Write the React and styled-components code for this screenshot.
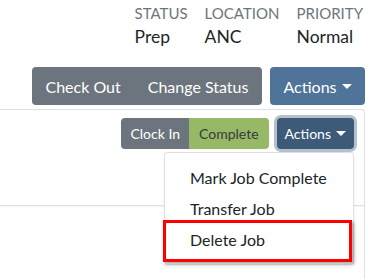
import React from 'react';
import styled, { createGlobalStyle, css } from 'styled-components';

const GlobalStyle = createGlobalStyle`
    body {
        margin: 0;
        background: #fff;
        font-family: Lato, "Open Sans", sans-serif;
        color: #212529;
    }
`;

const Page = styled.div`
    width: 370px;
    height: 279px;
    overflow: hidden;
`;

const InfoRow = styled.dl`
    display: flex;
    justify-content: flex-end;
    margin: 0;
    padding: 2px 7px 0 0;
`;

const InfoCol = styled.div`
    width: ${props => props.width || 'auto'};
    line-height: 23px;

    dt {
        font-size: 15px;
        color: #6c757d;
        text-transform: uppercase;
    }

    dd {
        margin: 0;
        font-size: 17.5px;
        color: #212529;
    }
`;

const Toolbar = styled.div`
    display: flex;
    justify-content: flex-end;
    gap: 8px;
    margin-top: 19px;
    padding-right: 5px;
`;

const variants = {
    secondary: css`background: #6c757d; color: #fff;`,
    primary: css`background: #4f7399; color: #fff;`,
    success: css`background: #97b865; color: #343a40;`,
    dark: css`background: #3d5a79; color: #fff;`,
};

const Button = styled.button`
    display: inline-flex;
    align-items: center;
    border: 0;
    margin: 0;
    font-family: inherit;
    font-size: ${props => props.small ? '14px' : '16px'};
    height: ${props => props.small ? '31px' : '38px'};
    padding: 0 ${props => props.pad || (props.small ? '9px' : '13.5px')};
    border-radius: 4px;
    cursor: pointer;
    ${props => variants[props.variant]}
    ${props => props.focused && css`
        box-shadow: 0 0 0 3px #b4c0ce;
    `}
`;

const ButtonGroup = styled.div`
    display: flex;

    ${Button} {
        border-radius: 0;
    }
    ${Button}:first-child {
        border-radius: 4px 0 0 4px;
    }
    ${Button}:last-child {
        border-radius: 0 4px 4px 0;
    }
`;

const Caret = styled.span`
    display: inline-block;
    margin-left: 5px;
    border-top: 5px solid currentColor;
    border-left: 5px solid transparent;
    border-right: 5px solid transparent;
`;

const Card = styled.section`
    margin: 4px 5px 0 0;
    border-top: 1px solid #dee2e6;
    border-right: 1px solid #dee2e6;
    border-top-right-radius: 4px;
    height: 200px;
`;

const CardHeader = styled.div`
    display: flex;
    justify-content: flex-end;
    align-items: flex-start;
    gap: 8px;
    height: 96px;
    padding: 8px 10px 0 0;
    box-sizing: border-box;
    border-bottom: 1px solid #dfe1e3;
    box-shadow: 0 1px 1px rgba(0, 0, 0, 0.04);
`;

const Dropdown = styled.div`
    position: relative;
`;

const Menu = styled.ul`
    position: absolute;
    top: 34px;
    right: 0;
    width: 190px;
    box-sizing: border-box;
    margin: 0;
    padding: 10px 0 8px;
    list-style: none;
    background: #fff;
    border: 1px solid rgba(0, 0, 0, 0.12);
    border-radius: 4px;
    box-shadow: 0 2px 4px rgba(0, 0, 0, 0.06);
    z-index: 2;
`;

const MenuItem = styled.li`
    position: relative;
    padding: 3px 0 4px 25px;
    font-size: 16px;
    line-height: 24px;
    color: #212529;

    ${props => props.highlighted && css`
        &::after {
            content: "";
            position: absolute;
            top: -5px;
            bottom: -6px;
            left: -2px;
            right: 1px;
            border: 3px solid #ff0000;
            box-shadow: 2px 2px 3px rgba(0, 0, 0, 0.35);
        }
    `}
`;

export default function App() {
    return (
        <Page>
            <GlobalStyle />

            <InfoRow>
                <InfoCol width="70px"><dt>Status</dt><dd>Prep</dd></InfoCol>
                <InfoCol width="92px"><dt>Location</dt><dd>ANC</dd></InfoCol>
                <InfoCol><dt>Priority</dt><dd>Normal</dd></InfoCol>
            </InfoRow>

            <Toolbar>
                <ButtonGroup>
                    <Button variant="secondary">Check Out</Button>
                    <Button variant="secondary">Change Status</Button>
                </ButtonGroup>
                <Button variant="primary">Actions<Caret /></Button>
            </Toolbar>

            <Card>
                <CardHeader>
                    <ButtonGroup>
                        <Button small variant="secondary">Clock In</Button>
                        <Button small pad="10px" variant="success">Complete</Button>
                    </ButtonGroup>
                    <Dropdown>
                        <Button small focused pad="8px" variant="dark">Actions<Caret /></Button>
                        <Menu>
                            <MenuItem>Mark Job Complete</MenuItem>
                            <MenuItem>Transfer Job</MenuItem>
                            <MenuItem highlighted>Delete Job</MenuItem>
                        </Menu>
                    </Dropdown>
                </CardHeader>
            </Card>
        </Page>
    );
}
